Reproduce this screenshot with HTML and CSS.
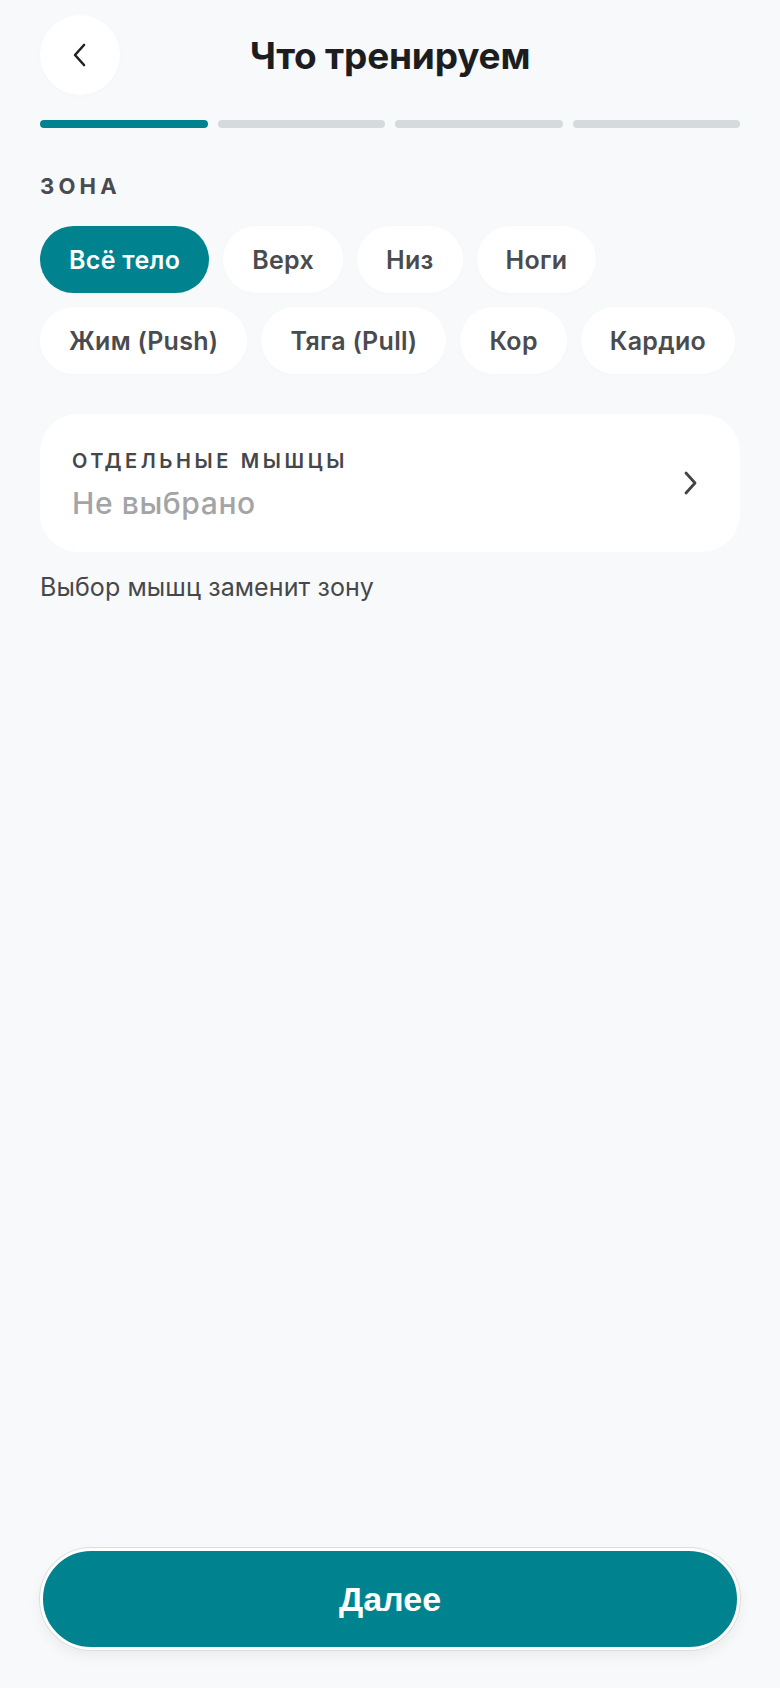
FILE: index.html
```html
<!DOCTYPE html>
<html lang="ru">
<head>
<meta charset="utf-8">
<title>Что тренируем</title>
<link rel="stylesheet" href="styles.css">
</head>
<body>
<div class="screen">
  <header class="header">
    <button class="back" aria-label="Назад">
      <svg width="16" height="24" viewBox="0 0 16 24"><path d="M12 2 L3 12 L12 22" fill="none" stroke="#222" stroke-width="2.6" stroke-linecap="round" stroke-linejoin="round"/></svg>
    </button>
    <h1 class="title">Что тренируем</h1>
  </header>
  <div class="progress">
    <span class="seg active"></span><span class="seg"></span><span class="seg"></span><span class="seg"></span>
  </div>

  <div class="section-label">ЗОНА</div>
  <div class="chips">
    <button class="chip selected">Всё тело</button>
    <button class="chip">Верх</button>
    <button class="chip">Низ</button>
    <button class="chip">Ноги</button>
    <button class="chip">Жим (Push)</button>
    <button class="chip">Тяга (Pull)</button>
    <button class="chip">Кор</button>
    <button class="chip">Кардио</button>
  </div>

  <div class="card">
    <div class="card-text">
      <div class="card-label">ОТДЕЛЬНЫЕ МЫШЦЫ</div>
      <div class="card-value">Не выбрано</div>
    </div>
    <svg class="card-chevron" width="16" height="24" viewBox="0 0 16 24"><path d="M4 2 L13 12 L4 22" fill="none" stroke="#444" stroke-width="2.8" stroke-linecap="round" stroke-linejoin="round"/></svg>
  </div>
  <p class="hint">Выбор мышц заменит зону</p>

  <footer class="footer">
    <button class="next">Далее</button>
  </footer>
</div>
</body>
</html>
```
FILE: styles.css
```css
* { box-sizing: border-box; }
html, body { margin: 0; padding: 0; }
body {
  background: #f7f9fb;
  font-family: Inter, "Noto Sans", sans-serif;
  color: #1c1d1f;
}
.screen {
  min-height: 100vh;
  display: flex;
  flex-direction: column;
  padding: 15px 40px 38px 40px;
}
.header {
  position: relative;
  height: 80px;
  display: flex;
  align-items: center;
  justify-content: center;
}
.back {
  position: absolute;
  left: 0;
  top: 0;
  width: 80px;
  height: 80px;
  border-radius: 50%;
  border: none;
  background: #ffffff;
  display: flex;
  align-items: center;
  justify-content: center;
  padding: 0;
  box-shadow: 0 1px 4px rgba(0,0,0,0.02);
}
.title {
  margin: 0;
  font-size: 37px;
  font-weight: 700;
  letter-spacing: -0.2px;
  color: #1c1d1f;
}
.progress {
  display: flex;
  gap: 10px;
  margin-top: 25px;
}
.seg {
  flex: 1;
  height: 8px;
  border-radius: 4px;
  background: #d5dadd;
}
.seg.active { background: #00838f; }
.section-label {
  margin-top: 45px;
  font-size: 22px;
  font-weight: 700;
  letter-spacing: 4.2px;
  color: #4a4b4e;
  line-height: 26px;
}
.chips {
  margin-top: 27px;
  display: flex;
  flex-wrap: wrap;
  gap: 14px;
}
.chip {
  height: 67px;
  padding: 0 29px;
  border-radius: 34px;
  border: none;
  background: #ffffff;
  font-family: Inter, "Noto Sans", sans-serif;
  font-size: 25px;
  font-weight: 600;
  letter-spacing: 0.3px;
  color: #4a4b4e;
  box-shadow: 0 1px 4px rgba(0,0,0,0.02);
}
.chip.selected {
  background: #00838f;
  color: #ffffff;
}
.card {
  margin-top: 40px;
  height: 138px;
  background: #ffffff;
  border-radius: 38px;
  display: flex;
  align-items: center;
  justify-content: space-between;
  padding: 0 42px 0 32px;
}
.card-text { margin-top: 4px; }
.card-label {
  font-size: 20px;
  font-weight: 600;
  letter-spacing: 3.6px;
  color: #46474a;
  line-height: 24px;
}
.card-value {
  margin-top: 12px;
  font-size: 30px;
  font-weight: 500;
  letter-spacing: 0.6px;
  color: #a3a4a6;
  line-height: 36px;
}
.hint {
  margin: 20px 0 0 0;
  font-size: 25px;
  font-weight: 400;
  letter-spacing: 0.1px;
  color: #46474a;
  line-height: 30px;
}
.footer {
  margin-top: auto;
}
.next {
  display: block;
  width: 100%;
  height: 102px;
  border-radius: 51px;
  background: #00838f;
  border: 3px solid #ffffff;
  box-shadow: 0 0 0 1px #dcdedf, 0 6px 14px rgba(0,0,0,0.06);
  color: #ffffff;
  font-family: "Liberation Sans", Arial, sans-serif;
  font-size: 34px;
  font-weight: 700;
}
```
